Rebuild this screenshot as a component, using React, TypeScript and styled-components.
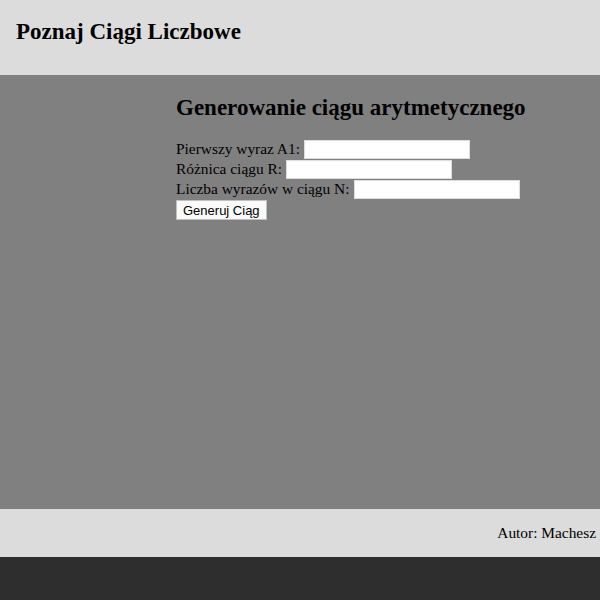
import styled, { createGlobalStyle } from "styled-components";

const Global = createGlobalStyle`
  html, body {
    margin: 0;
    padding: 0;
    background: #2e2e2e;
    font-family: "Liberation Serif", "Times New Roman", serif;
    color: #000;
  }
`;

const Header = styled.header`
  height: 75px;
  background: #dcdcdc;
  display: flex;
  align-items: center;
  padding: 0 16px;
  box-sizing: border-box;
`;

const Title = styled.h1`
  margin: 0 0 12px 0;
  font-size: 23px;
  font-weight: bold;
`;

const Main = styled.main`
  height: 434px;
  background: #808080;
  display: grid;
  grid-template-columns: 176px 1fr;
`;

const Content = styled.section`
  padding-top: 20px;
`;

const Heading = styled.h2`
  margin: 0 0 18px 0;
  font-size: 23px;
  font-weight: bold;
`;

const Form = styled.form`
  display: flex;
  flex-direction: column;
  align-items: flex-start;
  font-size: 15.4px;
`;

const Row = styled.label`
  display: flex;
  align-items: center;
  height: 20px;
  gap: 4px;
`;

const Input = styled.input`
  width: 166px;
  height: 19px;
  box-sizing: border-box;
  border: 1px solid #ddd;
  background: #fff;
  padding: 0;
`;

const Button = styled.button`
  margin-top: 1px;
  height: 20px;
  padding: 0 6px;
  font-family: "Liberation Sans", Arial, sans-serif;
  font-size: 13px;
  background: #fafafa;
  border: 1px solid #c0c0c0;
`;

const Footer = styled.footer`
  height: 48px;
  background: #dcdcdc;
  display: flex;
  align-items: center;
  justify-content: flex-end;
  padding: 0 4px;
  font-size: 15.4px;
`;

const fields = ["Pierwszy wyraz A1:", "Różnica ciągu R:", "Liczba wyrazów w ciągu N:"];

const App = () => {
  return (
    <>
      <Global />
      <Header>
        <Title>Poznaj Ciągi Liczbowe</Title>
      </Header>
      <Main>
        <div />
        <Content>
          <Heading>Generowanie ciągu arytmetycznego</Heading>
          <Form onSubmit={(e) => e.preventDefault()}>
            {fields.map((f) => (
              <Row key={f}>
                {f} <Input type="text" />
              </Row>
            ))}
            <Button type="submit">Generuj Ciąg</Button>
          </Form>
        </Content>
      </Main>
      <Footer>Autor: Machesz</Footer>
    </>
  );
};

export default App;
